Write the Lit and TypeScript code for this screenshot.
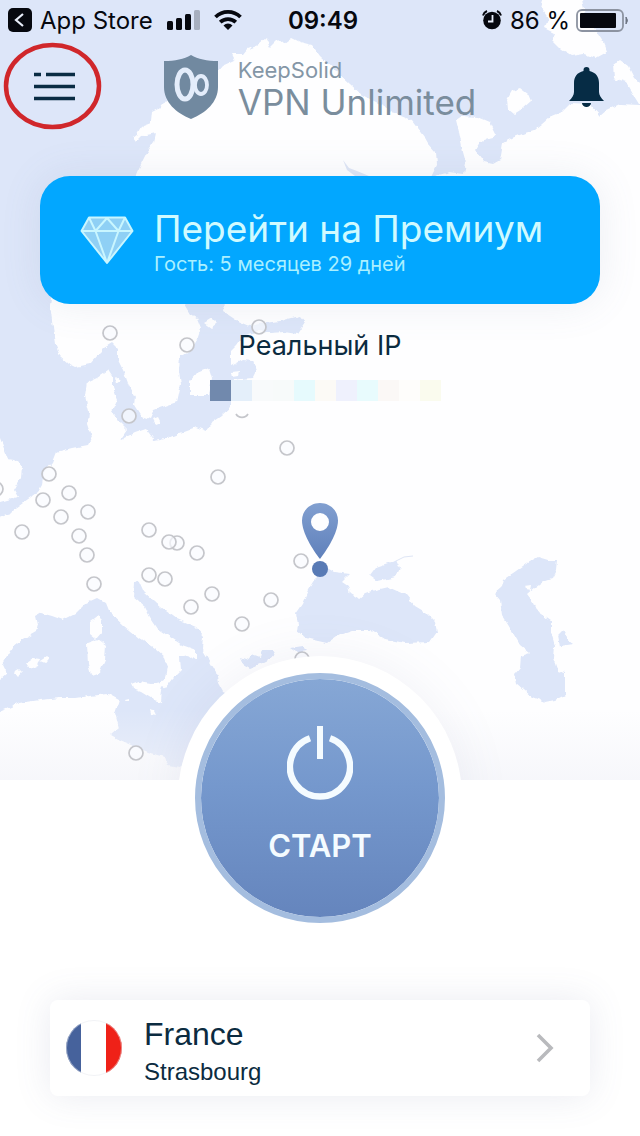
import { LitElement, html, svg, css } from 'lit';
import { customElement } from 'lit/decorators.js';

const SERVERS: [number, number][] = [
  [110, 333], [187, 345], [259, 327], [129, 416], [287, 448], [218, 477],
  [49, 474], [69, 493], [43, 500], [88, 512], [61, 517], [-4, 489],
  [22, 532], [79, 536], [87, 555], [149, 530], [177, 543], [169, 542],
  [197, 553], [94, 584], [149, 575], [165, 579], [212, 594], [191, 607],
  [271, 600], [242, 624], [301, 561], [302, 659], [136, 753],
];

const SEAS = [
  // Norwegian Sea, North Sea and the Baltic
  'M-20-20H660V105L640 105L620 104L607 110L600 116L590 105L570 104L562 112L550 117L535 130L525 133L512 138L503 143L500 160L493 164L484 162L475 150L480 142L492 139L496 134L490 122L478 117L462 116L456 120L459 132L463 152L466 163L464 174L450 172L431 177L437 165L436 152L428 143L424 136L412 120L395 113L380 104L362 95L350 84L335 70L320 56L312 45L300 42L292 38L284 44L278 39L270 47L266 38L258 45L248 49L244 54L232 54L235 60L222 66L212 78L190 90L166 100L160 108L152 112L151 122L143 125L138 134L133 138L136 142L142 136L156 133L154 142L146 154L137 172L130 200L60 250L50 304L53 328L55 344L60 356L68 363L76 367L90 364L97 356L105 348L113 343L118 348L118 360L124 372L129 386L135 397L134 405L141 416L150 419L154 410L168 405L177 402L181 384L179 370L180 356L190 352L197 340L201 328L197 318L190 314L184 304L184 290H226L224 312L236 320L250 326L266 323L280 321L292 318L300 316L305 322L297 334L284 332L270 333L258 331L243 336L236 346L231 351L231 366L243 360L253 361L256 370L252 378L231 380L231 407L222 415L212 422L206 431L196 427L180 433L168 438L155 441L146 429L134 433L120 440L127 430L117 420L112 412L118 400L113 388L113 378L108 370L98 377L87 382L85 396L89 412L88 425L92 437L88 445L72 448L56 452L52 462L44 472L42 485L38 492L24 502L16 508L10 514L-20 524V500L0 502L18 497L14 490L21 478L22 466L14 460L8 459L0 438H-20Z',
  // Mediterranean
  'M-20 720V690L0 680L7 674L2 664L12 648L22 640L36 632L38 625L36 616L41 613L52 616L63 620L75 614L86 603L97 598L106 603L110 613L124 626L140 639L154 648L165 658L168 666L166 678L160 684L166 688L173 679L181 671L180 657L188 655L196 661L196 650L182 645L170 637L158 629L150 617L145 607L133 597L134 583L138 580L143 591L155 602L166 611L177 619L196 627L204 636L203 650L209 660L216 672L218 683L223 692L240 700L230 720L205 740L180 768L168 766L165 757L148 752L132 745L120 740L111 735L119 728L115 713L119 700L108 694L90 696L75 698L60 698L40 700L20 703L4 710Z',
  // Black Sea
  'M320 572L309 590L303 604L296 614L298 624L297 632L305 638L318 641L327 643L340 634L352 630L370 630L385 639L405 643L430 642L437 632L435 622L425 612L415 606L406 595L388 587L375 590L365 593L358 599L350 594L348 586L342 582L350 574L335 572L325 566Z',
  // Sea of Azov
  'M370 575L376 567L388 563L396 559L400 568L396 577L378 581Z',
  // Caspian Sea
  'M494 593L501 587L503 580L516 571L527 563L538 557L548 560L557 560L556 570L552 578L543 581L535 587L527 594L534 603L538 612L551 621L551 632L555 646L554 658L559 672L562 671L565 672L565 695L555 700L545 702L532 697L524 690L517 684L515 674L520 668L521 656L530 653L520 645L510 628L502 615L500 600Z',
  'M558 636L563 631L569 641L574 645L560 647Z',
  // Aegean inlets
  'M240 657L248 660L252 654L260 657L262 650L275 650L272 658L260 664L250 668L243 664Z',
  'M290 648L303 646L307 650L296 652Z',
];

const ISLANDS = [
  'M541 7L546-10H580L585 14L594 28L603 42L607 52L596 58L584 54L572 56L562 50L552 40L555 33L545 28L549 18Z',
  'M613 65L620 60L628 66L634 78L644 86V112L634 96L626 82L614 78Z',
  'M507 100L512 91L520 88L528 94L531 101L522 109L514 114L508 109Z',
  'M90 622L98 616L102 620L102 632L96 639L90 634Z',
  'M87 643L98 639L106 645L105 660L100 672L91 675L88 664Z',
  'M26 663L33 658L40 659L38 665L30 669Z',
  'M40 660L46 656L50 659L45 662Z',
  'M14 672L19 669L22 672L18 677Z',
  'M131 684L139 681L152 683L165 680L162 690L161 702L154 700L141 692L133 689Z',
  'M150 710L154 711L156 715L151 714Z',
  'M125 700L129 699L130 702L126 702Z',
  'M153 419L158 417L161 423L156 425Z',
  'M204 323L212 318L217 323L211 328Z',
  'M190 381L197 373L209 368L212 378L209 395H190Z',
  'M232 372L240 371L239 375L233 376Z',
  'M116 377L121 381L117 384Z',
  'M524 586L531 585L530 591L525 590Z',
];

const MASKED_IP = [
  '#7189ad', '#e4effa', '#f8fafb', '#f7fafa', '#e6fafd', '#fcfaf6',
  '#eff1fd', '#e8fbfd', '#fbf8f6', '#fefdfb', '#fafbee',
];

@customElement('app-root')
export class AppRoot extends LitElement {
  static styles = css`
    :host {
      display: flex;
      flex-direction: column;
      min-height: 100vh;
      background: #fff;
      color: #0b2b40;
      font-family: Inter, Roboto, sans-serif;
    }
    button {
      font: inherit;
      color: inherit;
      border: 0;
      padding: 0;
      margin: 0;
      background: none;
      cursor: pointer;
    }
    svg {
      display: block;
      flex: none;
    }
    .world {
      position: relative;
      display: grid;
      overflow: hidden;
      background: #fefeff;
    }
    .map,
    .content {
      grid-area: 1 / 1;
      min-width: 0;
    }
    .map {
      width: 100%;
      height: auto;
    }
    .content {
      position: relative;
    }
    .halo {
      position: absolute;
      left: 50%;
      bottom: -160px;
      width: 284px;
      height: 284px;
      margin-left: -142px;
      border-radius: 50%;
      background: #fff;
      box-shadow: 0 0 50px rgba(120, 125, 170, 0.1);
    }
    .status {
      display: grid;
      grid-template-columns: 1fr auto 1fr;
      align-items: center;
      height: 40px;
      padding: 0 10px 0 8px;
      font-size: 24px;
      color: #06080f;
    }
    .side {
      display: flex;
      align-items: center;
      gap: 8px;
    }
    .side.end {
      justify-content: flex-end;
    }
    .signal {
      margin-left: 6px;
    }
    .wifi {
      margin-left: 6px;
    }
    .clock {
      padding-left: 8px;
      font-weight: 600;
    }
    .battery {
      margin-left: -2px;
    }
    .header {
      display: grid;
      grid-template-columns: 1fr auto 1fr;
      align-items: center;
      height: 94px;
      padding: 0 2px;
    }
    .menu {
      justify-self: start;
    }
    .bell {
      justify-self: end;
      padding: 0 34px;
    }
    .brand {
      display: flex;
      align-items: center;
      gap: 20px;
    }
    .names {
      display: flex;
      flex-direction: column;
      padding-top: 6px;
      color: #8496a6;
    }
    .maker {
      font-size: 22px;
      line-height: 24px;
    }
    .product {
      font-size: 35px;
      line-height: 40px;
      color: #7a8d9d;
    }
    .promo {
      display: flex;
      align-items: center;
      gap: 20px;
      width: calc(100% - 80px);
      min-height: 128px;
      margin: 42px 40px 0;
      padding: 0 40px;
      border-radius: 30px;
      background: #02a7ff;
      color: #d0faff;
      text-align: left;
      box-shadow: 0 0 40px rgba(110, 120, 160, 0.12);
    }
    .promo-text {
      display: flex;
      flex-direction: column;
      padding-top: 4px;
    }
    .promo-title {
      font-size: 37px;
      line-height: 44px;
    }
    .promo-sub {
      font-size: 20px;
      line-height: 26px;
      color: #aaf0ff;
    }
    .ip {
      display: flex;
      flex-direction: column;
      align-items: center;
      gap: 17px;
      margin-top: 25px;
    }
    .ip-label {
      font-size: 27px;
      line-height: 34px;
    }
    .masked {
      margin-left: 10px;
    }
    .panel {
      position: relative;
      display: flex;
      flex-direction: column;
      align-items: center;
      padding: 0 50px 40px;
    }
    .power {
      box-sizing: border-box;
      display: flex;
      flex-direction: column;
      align-items: center;
      gap: 26px;
      width: 250px;
      height: 250px;
      margin-top: -107px;
      padding-top: 47px;
      border: 6px solid #a4bddf;
      border-radius: 50%;
      background: linear-gradient(#86a7d5, #7598cd 45%, #6585bd);
      background-clip: padding-box;
      color: #f4fbff;
      font-size: 31px;
      line-height: 40px;
      font-weight: 600;
    }
    .location {
      box-sizing: border-box;
      display: flex;
      align-items: center;
      gap: 22px;
      width: 100%;
      min-height: 96px;
      margin-top: 77px;
      padding: 0 36px 0 16px;
      border-radius: 8px;
      background: #fff;
      box-shadow: 0 0 36px rgba(90, 100, 150, 0.13);
      text-align: left;
      font-family: 'Liberation Sans', Arial, sans-serif;
    }
    .place {
      display: flex;
      flex-direction: column;
      flex: 1;
      padding-top: 8px;
    }
    .country {
      font-size: 32px;
      line-height: 40px;
    }
    .city {
      font-size: 24px;
      line-height: 36px;
    }
  `;

  private renderMap() {
    return html`
      <svg class="map" viewBox="0 0 640 780" aria-hidden="true">
        <defs>
          <filter id="coast" x="0" y="0" width="100%" height="100%" filterUnits="userSpaceOnUse"
            color-interpolation-filters="sRGB">
            <feTurbulence type="fractalNoise" baseFrequency="0.14" numOctaves="2" seed="4" />
            <feDisplacementMap in="SourceGraphic" scale="5" xChannelSelector="R" yChannelSelector="G" />
          </filter>
          <linearGradient id="floor" x1="0" y1="0" x2="0" y2="1">
            <stop offset="0" stop-color="#f3f4f9" stop-opacity="0" />
            <stop offset="1" stop-color="#f3f4f9" stop-opacity="0.7" />
          </linearGradient>
          <linearGradient id="pin" x1="0" y1="0" x2="0" y2="1">
            <stop offset="0" stop-color="#819fd0" />
            <stop offset="1" stop-color="#5f80bb" />
          </linearGradient>
        </defs>
        <g filter="url(#coast)">
          ${SEAS.map((d) => svg`<path d=${d} fill="#dde6f9" />`)}
          ${ISLANDS.map((d) => svg`<path d=${d} fill="#fefeff" />`)}
        </g>
        <path d="M343 160l6 8 8 3 12 5h-14l-8-6z" fill="#dfe6f6" />
        <path d="M396 561l8-4 9-1" fill="none" stroke="#dfe6f6" />
        <rect y="710" width="640" height="70" fill="url(#floor)" />
        ${SERVERS.map(
          ([x, y]) => svg`<circle cx=${x} cy=${y} r="7" fill="#fafbff" fill-opacity="0.7"
            stroke="#c5c6cb" stroke-width="1.7" />`,
        )}
        <path d="M236 414a7 7 0 0 0 12 0" fill="none" stroke="#c5c6cb" stroke-width="1.7" />
        <path fill="url(#pin)" fill-rule="evenodd"
          d="M320 503c-10.200 0-18 7.800-18 17.500C302 533 313 550 320 559c7-9 18-26 18-38.500 0-9.700-7.800-17.500-18-17.500zm0 10a9 9 0 1 1 0 18 9 9 0 0 1 0-18z" />
        <circle cx="320" cy="569" r="8" fill="#587ab5" />
      </svg>
    `;
  }

  private renderStatus() {
    return html`
      <div class="status">
        <div class="side">
          <svg width="24" height="24" viewBox="0 0 24 24" aria-hidden="true">
            <rect width="24" height="24" rx="5" fill="#06080f" />
            <path d="M15 6L8 12l7 6" fill="none" stroke="#e8eefb" stroke-width="2.200" />
          </svg>
          <span>App Store</span>
          <svg class="signal" width="33" height="20" viewBox="0 0 33 20" aria-hidden="true">
            <g fill="#06080f">
              <rect y="11" width="6" height="9" rx="1.500" />
              <rect x="9" y="8" width="6" height="12" rx="1.500" />
              <rect x="18" y="4" width="6" height="16" rx="1.500" />
            </g>
            <rect x="27" width="6" height="20" rx="1.500" fill="#a7afbf" />
          </svg>
          <svg class="wifi" width="28" height="20" viewBox="0 0 28 20" aria-hidden="true">
            <g fill="none" stroke="#06080f" stroke-width="3.800">
              <path d="M1.500 7a18 18 0 0 1 25 0" />
              <path d="M6.200 12.200a11.500 11.500 0 0 1 15.600 0" />
            </g>
            <path d="M14 20l-4.500-4.600a6.500 6.500 0 0 1 9 0z" fill="#06080f" />
          </svg>
        </div>
        <span class="clock">09:49</span>
        <div class="side end">
          <svg width="20" height="20" viewBox="0 0 20 20" aria-hidden="true">
            <circle cx="10" cy="10.500" r="8.800" fill="#06080f" />
            <path d="M1 5.500A7 7 0 0 1 5 1M19 5.500A7 7 0 0 0 15 1" fill="none" stroke="#06080f" stroke-width="2" />
            <path d="M10.500 5v6.500H6" fill="none" stroke="#e8eefb" stroke-width="1.800" />
          </svg>
          <span>86 %</span>
          <svg class="battery" width="54" height="23" viewBox="0 0 54 23" aria-hidden="true">
            <rect x="1" y="1" width="46" height="21" rx="5" fill="none" stroke="#8c93a1" stroke-width="1.800" />
            <rect x="4" y="4" width="36" height="15" rx="1" fill="#06080f" />
            <path d="M50 8q3 3.500 0 7z" fill="#6d7482" stroke="#6d7482" />
          </svg>
        </div>
      </div>
    `;
  }

  private renderHeader() {
    return html`
      <header class="header">
        <button class="menu" aria-label="Меню">
          <svg width="102" height="92" viewBox="0 0 102 92">
            <ellipse cx="50.500" cy="45" rx="46.500" ry="41" fill="none" stroke="#d0272b" stroke-width="4.500" />
            <path d="M32 33.500h7M44 33.500h29M32 45.500h41M32 57.500h41" stroke="#0a2c44" stroke-width="3.400" />
          </svg>
        </button>
        <div class="brand">
          <svg width="54" height="64" viewBox="0 0 54 64" aria-hidden="true">
            <path d="M27 0c7 4 16 6 27 6v26c0 15-12 26-27 32C12 58 0 47 0 32V6c11 0 20-2 27-6z" fill="#7189a0" />
            <g fill="none" stroke="#e4edfb">
              <ellipse cx="21" cy="29.500" rx="8" ry="14.500" stroke-width="5" />
              <ellipse cx="37" cy="30" rx="6" ry="9" stroke-width="3.800" />
            </g>
          </svg>
          <div class="names">
            <span class="maker">KeepSolid</span>
            <span class="product">VPN Unlimited</span>
          </div>
        </div>
        <button class="bell" aria-label="Уведомления">
          <svg width="35" height="40" viewBox="0 0 35 40">
            <path fill="#062c45"
              d="M17.500 0a3 3 0 0 1 3 3v1C27 5.500 30 10 30 16v9c0 3 2 6 5 9H0c3-3 5-6 5-9v-9C5 10 8 5.500 14.500 4V3a3 3 0 0 1 3-3zM13 36h9a4.500 4 0 0 1-9 0z" />
          </svg>
        </button>
      </header>
    `;
  }

  render() {
    return html`
      <section class="world">
        ${this.renderMap()}
        <div class="content">
          ${this.renderStatus()} ${this.renderHeader()}
          <button class="promo">
            <svg width="54" height="49" viewBox="0 0 54 49" aria-hidden="true">
              <path d="M9 1.500h36L52.500 15 27 47 1.500 15z" fill="#8fd0f5" />
              <path d="M9 1.500h36L52.500 15 27 47 1.500 15zM1.500 15h51M9 1.500L15.500 15 27 2l11.500 13L45 1.500M15.500 15L27 47l11.500-32"
                fill="none" stroke="#c9f6ff" stroke-width="2" stroke-linejoin="round" />
            </svg>
            <span class="promo-text">
              <span class="promo-title">Перейти на Премиум</span>
              <span class="promo-sub">Гость: 5 месяцев 29 дней</span>
            </span>
          </button>
          <div class="ip">
            <span class="ip-label">Реальный IP</span>
            <svg class="masked" width="231" height="21" viewBox="0 0 231 21" aria-hidden="true">
              ${MASKED_IP.map((c, i) => svg`<rect x=${i * 21} width="21" height="21" fill=${c} />`)}
            </svg>
          </div>
        </div>
        <div class="halo"></div>
      </section>
      <section class="panel">
        <button class="power">
          <svg width="66" height="74" viewBox="0 0 66 74" aria-hidden="true">
            <path d="M23 12.300a30 30 0 1 0 20 0" fill="none" stroke="currentColor" stroke-width="6.500" />
            <rect x="30" width="6" height="33" fill="currentColor" />
          </svg>
          <span>СТАРТ</span>
        </button>
        <button class="location">
          <svg width="56" height="56" viewBox="0 0 56 56" aria-hidden="true">
            <clipPath id="disc"><circle cx="28" cy="28" r="28" /></clipPath>
            <g clip-path="url(#disc)">
              <rect width="56" height="56" fill="#fff" />
              <rect width="15" height="56" fill="#46629c" />
              <rect x="40" width="16" height="56" fill="#ef2118" />
            </g>
            <circle cx="28" cy="28" r="27.500" fill="none" stroke="#e6e8ee" stroke-opacity="0.5" />
          </svg>
          <span class="place">
            <span class="country">France</span>
            <span class="city">Strasbourg</span>
          </span>
          <svg width="18" height="30" viewBox="0 0 18 30" aria-hidden="true">
            <path d="M2 2l13 13L2 28" fill="none" stroke="#b9babd" stroke-width="3.600" />
          </svg>
        </button>
      </section>
    `;
  }
}
